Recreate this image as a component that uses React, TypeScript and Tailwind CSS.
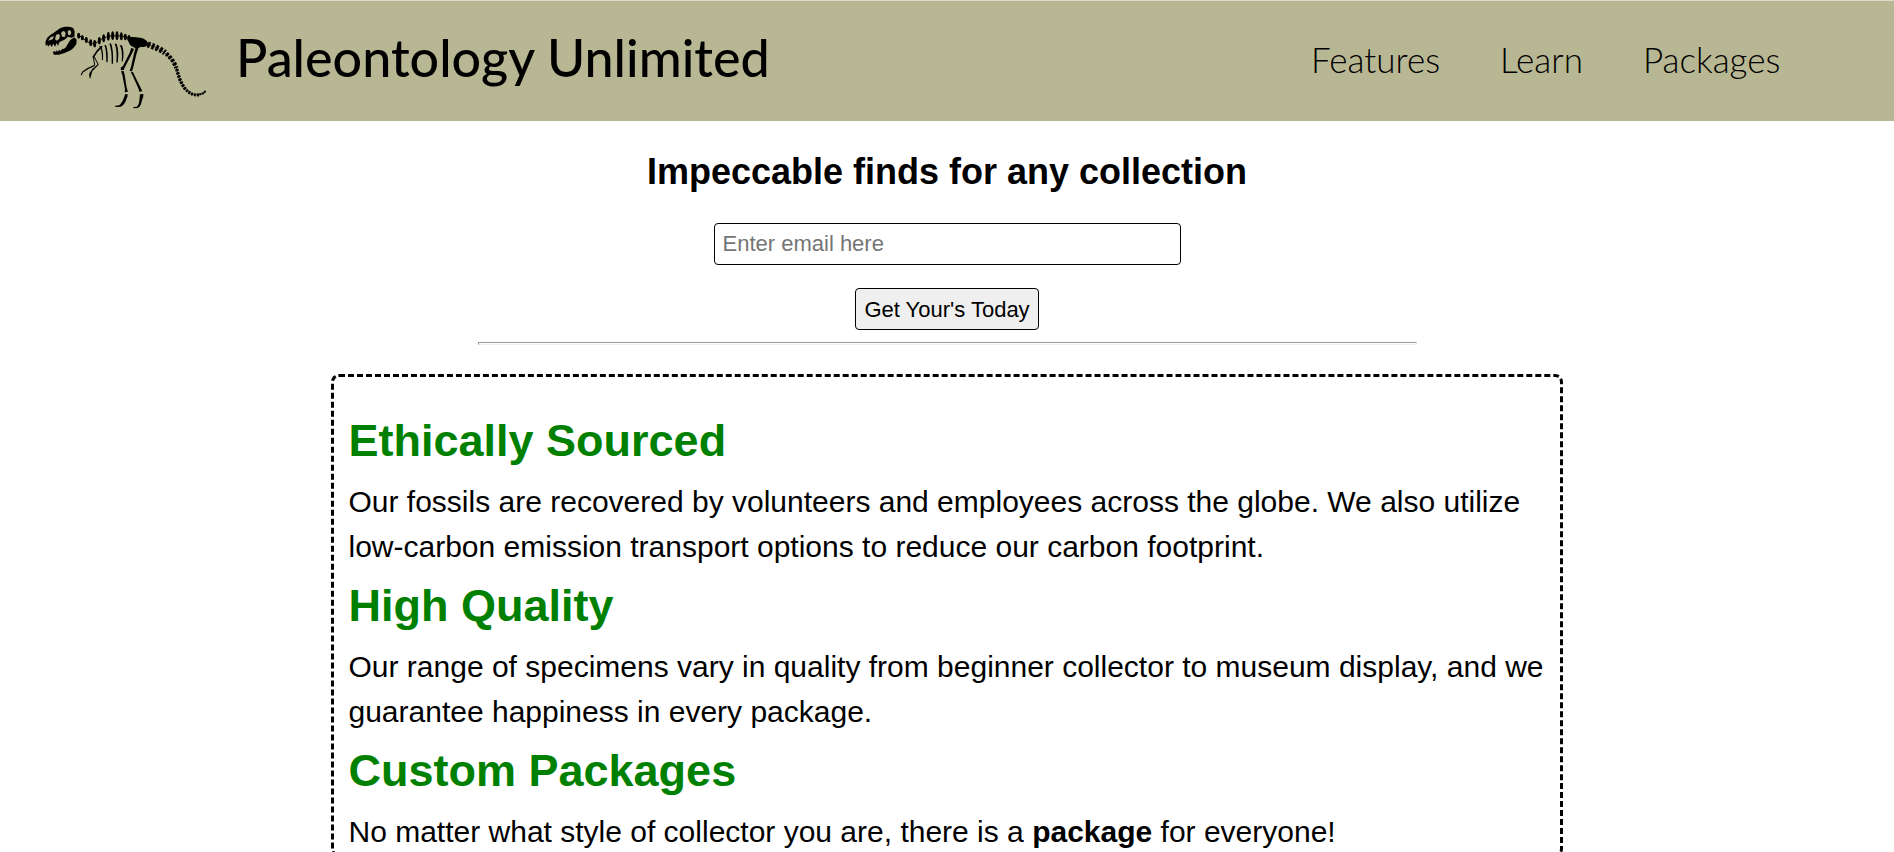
const features = [
  {
    title: "Ethically Sourced",
    body: (
      <>
        Our fossils are recovered by volunteers and employees across the globe. We also utilize
        low-carbon emission transport options to reduce our carbon footprint.
      </>
    ),
  },
  {
    title: "High Quality",
    body: (
      <>
        Our range of specimens vary in quality from beginner collector to museum display, and we
        guarantee happiness in every package.
      </>
    ),
  },
  {
    title: "Custom Packages",
    body: (
      <>
        No matter what style of collector you are, there is a <strong>package</strong> for everyone!
      </>
    ),
  },
];

// Neck and back vertebrae: centre x, centre y, half height
const vertebrae = [
  [146, 104, 9],
  [157, 110, 8],
  [169, 117, 9],
  [182, 125, 10],
  [194, 128, 11],
  [208, 119, 11],
  [221, 112, 12],
  [235, 106, 13],
  [248, 104, 13],
  [261, 104, 13],
  [274, 106, 12],
  [286, 108, 10],
  [297, 111, 9],
];

function Skeleton() {
  return (
    <svg viewBox="45 69 486 258" className="h-[86px] w-[162px] shrink-0" role="img" aria-label="Dinosaur skeleton">
      {/* skull and jaw */}
      <path
        fillRule="evenodd"
        d="M46 127 C47 113 56 104 67 98 L88 83 C101 76 119 76 130 82 L134 91 L133 107 L125 110 L113 107 C105 118 95 119 88 124 L84 135 L80 126 L75 137 L70 128 L65 138 L60 130 L55 137 L51 130 L48 136 Z M54 119 L68 115 L72 106 L62 108 Z M75 115 L81 119 L88 113 L90 102 L84 99 L78 102 Z M93 97 L97 108 L105 107 L107 96 L103 91 L97 91 Z M113 90 L114 101 L120 103 L124 95 L121 87 Z"
      />
      <path d="M133 109 L140 116 L139 129 C133 140 124 148 112 152 C98 159 83 163 72 161 L68 154 L74 150 L78 153 L80 147 L84 153 L87 146 L92 150 L96 144 L102 143 C111 139 112 126 122 116 Z" />
      {/* neck and back */}
      {vertebrae.map(([x, y, r]) => (
        <ellipse key={x} cx={x} cy={y} rx="4.5" ry={r} />
      ))}
      <g fill="none" stroke="#000">
        <path d="M142 102 C158 108 168 121 181 127 C199 133 205 117 221 111 C242 101 271 103 300 110" strokeWidth="3" />
        {/* tail */}
        <path d="M353 130 C372 137 392 145 405 155" strokeWidth="18" strokeDasharray="8 5" />
        <path d="M409 158 C422 169 433 184 439 201" strokeWidth="13" strokeDasharray="8 4" />
        <path d="M440 204 C446 226 452 248 467 265" strokeWidth="10" strokeDasharray="7 3" />
        <path d="M469 267 C480 279 494 284 508 281" strokeWidth="9" strokeDasharray="6 3" />
        <path d="M508 281 L520 277 L528 269" strokeWidth="6" strokeDasharray="6 2" />
        <path d="M353 130 C388 140 424 162 440 204 C446 226 452 248 468 266 C486 283 508 286 528 269" strokeWidth="2" />
      </g>
      {/* pelvis */}
      <path d="M291 111 C299 107 314 108 330 110 C343 112 354 120 355 130 C350 138 341 139 332 137 L321 145 L309 137 C299 134 298 126 294 120 Z" />
      {/* ribs */}
      <path d="M207 137 Q216 141 216 177 L219 178 Q221 143 211 135 Z M223 133 Q229 145 229 183 L233 184 Q235 150 228 132 Z M238 128 Q246 145 245 188 L249 188 Q251 148 243 127 Z M254 128 Q262 145 259 184 L263 185 Q268 152 260 128 Z M269 133 Q278 145 275 181 L278 182 Q284 155 276 133 Z" />
      {/* arms */}
      <g fill="none" stroke="#000" strokeLinejoin="round" strokeLinecap="round">
        <path d="M215 137 L201 151 L190 168" strokeWidth="5" />
        <path d="M190 168 L194 191 M193 168 L204 189" strokeWidth="3" />
        <path d="M193 194 Q171 202 158 213 L154 221 M171 205 L158 213" strokeWidth="3.5" />
        <path d="M204 191 L185 210 L180 230 M190 203 L180 217 L179 224" strokeWidth="3.5" />
      </g>
      {/* legs */}
      <path d="M304 140 L312 144 L307 155 L285 198 L281 207 L273 208 L272 200 L279 195 L299 155 Z M317 140 L325 143 L320 157 L309 202 L306 211 L299 209 L303 198 L313 153 Z M273 211 L281 210 L284 221 L290 260 L294 272 L284 274 L285 264 L277 222 Z M302 212 L309 213 L313 222 L331 258 L337 271 L328 272 L325 262 L308 224 Z" />
      <path d="M285 280 L292 279 L293 285 L286 303 C281 313 273 319 264 318 L254 317 L256 314 L268 313 C275 306 280 296 283 287 Z M330 280 L340 279 L340 286 L335 302 C333 314 327 321 319 322 L309 321 L311 318 L321 317 L327 306 L329 289 Z" />
    </svg>
  );
}

export default function App() {
  return (
    <div className="bg-white font-['Liberation_Sans',Arial,sans-serif] text-black">
      <header className="flex min-h-[121px] items-center border-t border-[#dcdbc9] bg-[#b8b793] pr-[6%] pl-[45px] font-[Papyrus,Lato,sans-serif]">
        <a href="#top" className="flex items-center gap-[29px] pt-3">
          <Skeleton />
          <span className="pb-5 text-[52px] leading-[60px] font-medium whitespace-nowrap">Paleontology Unlimited</span>
        </a>
        <nav className="ml-auto flex gap-[60px] pb-1 text-[35px] leading-[48px] font-light">
          <a href="#features">Features</a>
          <a href="#learn">Learn</a>
          <a href="#packages">Packages</a>
        </nav>
      </header>
      <main className="flex flex-col items-center">
        <h1 className="mt-6 text-center text-[36px] leading-[54px] font-bold">Impeccable finds for any collection</h1>
        <form className="mt-6 flex w-full flex-col items-center gap-[23px]" onSubmit={(e) => e.preventDefault()}>
          <input
            type="email"
            aria-label="Email"
            placeholder="Enter email here"
            className="h-[42px] w-[467px] max-w-full rounded border border-black bg-white px-2 text-[22px] placeholder:text-[#757575]"
          />
          <button type="submit" className="h-[42px] rounded border border-black bg-[#efefef] px-2 text-[22px]">
            Get Your's Today
          </button>
        </form>
        <hr className="mt-3 h-[3px] w-[939px] max-w-full border border-t-[#9a9a9a] border-r-[#eeeeee] border-b-[#eeeeee] border-l-[#9a9a9a]" />
        <div id="features" className="mt-[29px] w-[65.1%] rounded-lg border-3 border-dashed border-black px-[15px] pt-[27px]">
          {features.map((f) => (
            <section key={f.title}>
              <h2 className="pb-0.5 text-[45px] leading-[73px] font-bold text-[#008000]">{f.title}</h2>
              <p className="text-[30px] leading-[45px]">{f.body}</p>
            </section>
          ))}
        </div>
      </main>
    </div>
  );
}
